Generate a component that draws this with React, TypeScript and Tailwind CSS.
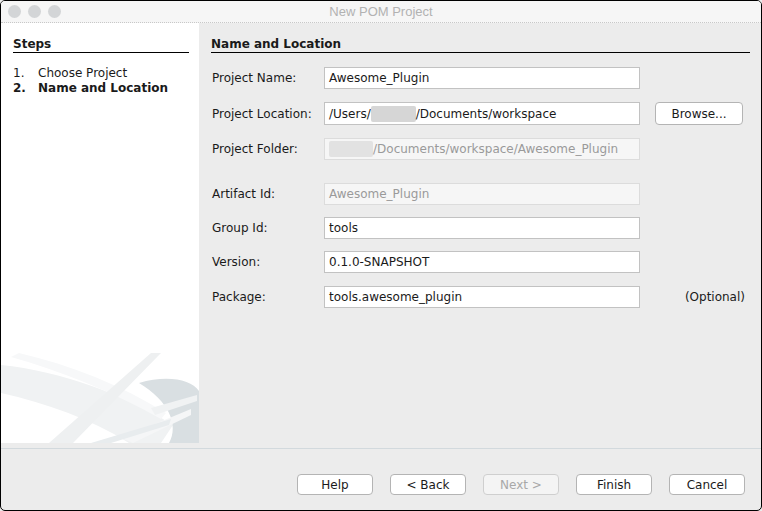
import React from "react";

const font = { fontFamily: '"DejaVu Sans", "Lucida Grande", Verdana, sans-serif' };

function Swoosh() {
  return (
    <svg className="block" width="198" height="90" viewBox="0 0 198 90">
      <path d="M0,12 C60,18 125,42 172,72 L160,90 L128,90 C90,66 45,50 0,40 Z" fill="#f0f2f3" />
      <path d="M18,0 C70,12 120,32 165,60 L160,66 C110,38 60,18 10,4 Z" fill="#f7f8f9" />
      <path d="M150,0 L160,0 L72,90 L48,90 Z" fill="#eef0f1" />
      <path d="M138,30 C165,22 190,26 198,38 L198,90 L168,90 C178,72 168,48 138,30 Z" fill="#d9dfe2" />
      <path d="M150,55 L196,42 L196,48 L154,62 Z" fill="#f0f2f3" />
      <path d="M120,85 L190,56 L190,62 L132,90 Z" fill="#f5f6f7" />
      <path d="M90,90 L170,66 L168,72 L110,90 Z" fill="#e8ecee" />
    </svg>
  );
}

function Field({ children, disabled }: { children: React.ReactNode; disabled?: boolean }) {
  return (
    <div
      className={
        "h-[22px] w-[316px] flex items-center pl-[4px] text-[12px] whitespace-nowrap overflow-hidden border " +
        (disabled ? "bg-[#f6f6f6] border-[#dcdcdc] text-[#9a9a9a]" : "bg-white border-[#c2c2c2] text-[#1a1a1a]")
      }
    >
      {children}
    </div>
  );
}

function Blur({ w }: { w: string }) {
  return <span className={"inline-block h-[16px] bg-[#d6d6d6] rounded-[2px] " + w} />;
}

function Btn({ label, disabled }: { label: string; disabled?: boolean }) {
  return (
    <div
      className={
        "h-[21px] w-[76px] flex items-center justify-center rounded-[4px] border text-[12px] " +
        (disabled ? "bg-[#f4f4f4] border-[#cfcfcf] text-[#a8a8a8]" : "bg-white border-[#b4b4b4] text-[#1a1a1a]")
      }
    >
      {label}
    </div>
  );
}

function Row({ label, children, extra, mt }: { label: string; children: React.ReactNode; extra?: React.ReactNode; mt: string }) {
  return (
    <div className={"flex items-center " + mt}>
      <div className="w-[113px] pl-[1px] text-[12px] text-[#1a1a1a]">{label}</div>
      {children}
      {extra}
    </div>
  );
}

export default function App() {
  return (
    <div style={font} className="w-[762px] h-[511px] bg-[#ececec]">
      <div className="w-full h-full flex flex-col border border-black rounded-[5px] overflow-hidden bg-[#ececec]">
        {/* Title bar */}
        <div className="relative h-[22px] shrink-0 bg-[#f6f6f6] border-b border-dotted border-[#c8c8c8] flex items-center">
          <div className="flex gap-[7px] pl-[7px]">
            <span className="w-[13px] h-[13px] rounded-full bg-[#d3d5d7]" />
            <span className="w-[13px] h-[13px] rounded-full bg-[#d3d5d7]" />
            <span className="w-[13px] h-[13px] rounded-full bg-[#d3d5d7]" />
          </div>
          <div className="absolute inset-0 flex items-center justify-center text-[13px] text-[#b2b2b2]" style={{ fontFamily: '"Liberation Sans", Arial, sans-serif' }}>
            New POM Project
          </div>
        </div>

        {/* Main */}
        <div className="flex h-[420px] shrink-0">
          <div className="w-[198px] bg-white flex flex-col">
            <div className="pt-[14px] pl-[12px] pr-[10px]">
              <div className="text-[12px] font-bold text-[#1a1a1a] leading-[14px] pb-[1px] border-b border-black">Steps</div>
              <div className="mt-[13px] text-[12px] text-[#1a1a1a] leading-[15px]">
                <div className="flex"><span className="w-[25px]">1.</span><span>Choose Project</span></div>
                <div className="flex font-bold"><span className="w-[25px]">2.</span><span>Name and Location</span></div>
              </div>
            </div>
            <div className="mt-auto">
              <Swoosh />
            </div>
          </div>

          <div className="flex-1 pt-[14px] pl-[12px] pr-[11px]">
            <div className="text-[12px] font-bold text-[#1a1a1a] leading-[14px] pb-[1px] border-b border-black">Name and Location</div>
            <div className="flex flex-col">
              <Row label="Project Name:" mt="mt-[14px]">
                <Field>Awesome_Plugin</Field>
              </Row>
              <Row
                label="Project Location:"
                mt="mt-[13px]"
                extra={
                  <div className="ml-[15px] h-[23px] w-[88px] flex items-center justify-center rounded-[4px] border border-[#b4b4b4] bg-white text-[12px] text-[#1a1a1a]">
                    Browse...
                  </div>
                }
              >
                <div className="h-[23px] w-[316px] flex items-center pl-[4px] text-[12px] whitespace-nowrap overflow-hidden border bg-white border-[#c2c2c2] text-[#1a1a1a]">
                  /Users/<Blur w="w-[45px]" />/Documents/workspace
                </div>
              </Row>
              <Row label="Project Folder:" mt="mt-[13px]">
                <Field disabled>
                  <Blur w="w-[44px] bg-[#e2e2e2]" />/Documents/workspace/Awesome_Plugin
                </Field>
              </Row>
              <Row label="Artifact Id:" mt="mt-[23px]">
                <Field disabled>Awesome_Plugin</Field>
              </Row>
              <Row label="Group Id:" mt="mt-[12px]">
                <Field>tools</Field>
              </Row>
              <Row label="Version:" mt="mt-[12px]">
                <Field>0.1.0-SNAPSHOT</Field>
              </Row>
              <Row
                label="Package:"
                mt="mt-[13px]"
                extra={<div className="ml-auto text-[12px] text-[#1a1a1a] pr-[5px]">(Optional)</div>}
              >
                <Field>tools.awesome_plugin</Field>
              </Row>
            </div>
          </div>
        </div>

        {/* Footer */}
        <div className="h-[5px] shrink-0" />
        <div className="flex-1 border-t border-[#d2d9dd] flex justify-end items-start pt-[25px] pr-[16px] gap-[17px]">
          <Btn label="Help" />
          <Btn label="< Back" />
          <Btn label="Next >" disabled />
          <Btn label="Finish" />
          <Btn label="Cancel" />
        </div>
      </div>
    </div>
  );
}
